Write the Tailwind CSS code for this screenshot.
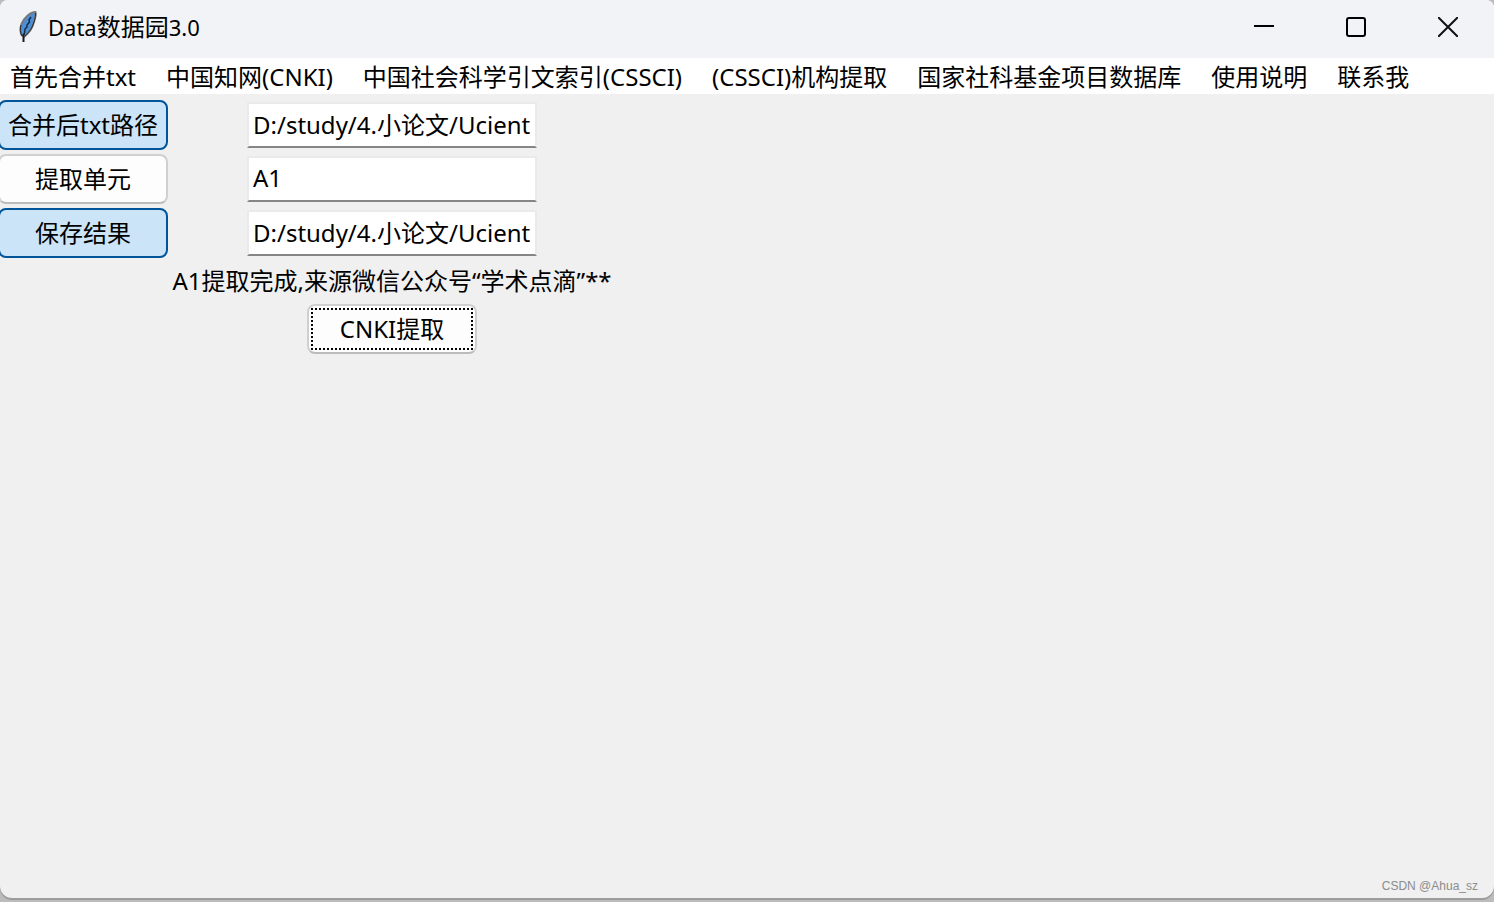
<!DOCTYPE html>
<html lang="zh-CN">
<head>
  <meta charset="UTF-8">
  <meta name="viewport" content="width=device-width, initial-scale=1.0">
  <title>Data数据园3.0</title>
  <script src="https://cdn.jsdelivr.net/npm/@tailwindcss/browser@4"></script>
</head>
<body class="min-h-screen flex flex-col bg-[#bcbcbc] pb-1 text-2xl text-black font-['Noto_Sans','Noto_Sans_CJK_SC',sans-serif]">
  <div class="relative flex-1 flex flex-col bg-[#f0f0f0] rounded-t-lg rounded-b-xl overflow-hidden shadow-[0_2px_0_#9c9c9c]">

    <!-- Title bar -->
    <header class="h-[58px] flex items-center bg-[#f1f3f7] pl-[18px] pb-1">
      <svg class="w-5 h-8 shrink-0" viewBox="0 0 20 32" fill="none">
        <path d="M17.500 1C12 1 6 7 3.500 13C2 17 2 20 3.500 24L6 26C11 22 14.500 17 16 11C17 7 18.500 4 17.500 1Z" fill="#4d8fd6" stroke="#77797c" stroke-width="2"/>
        <path d="M17.500 2C18 6 16 12 13.500 17C12 20 9 23 7 25M3 14C2 18 2 21 4 25" stroke="#2b2b2b" stroke-width="1"/>
        <path d="M13 6L11 9L11.500 11L9 14V16L7 18L6.500 22L5.500 24" stroke="#142c48" stroke-width="1.500"/>
        <path d="M5.500 23V31" stroke="#1c1c1c" stroke-width="2"/>
      </svg>
      <h1 class="ml-[10px] whitespace-nowrap"><span class="text-[22px]">Data</span>数据园<span class="text-[22px]">3.0</span></h1>
      <div class="ml-auto flex h-full">
        <button type="button" class="w-[92px] flex items-center justify-center" aria-label="最小化">
          <svg class="w-5 h-5" viewBox="0 0 20 20" stroke="#000" stroke-width="2"><path d="M0 9H20"/></svg>
        </button>
        <button type="button" class="w-[92px] flex items-center justify-center" aria-label="最大化">
          <svg class="w-5 h-5" viewBox="0 0 20 20" fill="none" stroke="#000" stroke-width="2"><rect x="1" y="1" width="18" height="18" rx="2"/></svg>
        </button>
        <button type="button" class="w-[92px] flex items-center justify-center" aria-label="关闭">
          <svg class="w-5 h-5" viewBox="0 0 20 20" stroke="#111" stroke-width="2"><path d="M0 0L20 20M20 0L0 20"/></svg>
        </button>
      </div>
    </header>

    <!-- Menu -->
    <nav class="h-9 flex items-center gap-[30px] bg-white pl-[10px] pt-px whitespace-nowrap">
      <a href="#">首先合并txt</a>
      <a href="#">中国知网(CNKI)</a>
      <a href="#">中国社会科学引文索引(CSSCI)</a>
      <a href="#">(CSSCI)机构提取</a>
      <a href="#">国家社科基金项目数据库</a>
      <a href="#">使用说明</a>
      <a href="#">联系我</a>
    </nav>

    <!-- Form, the left buttons run under the window edge -->
    <form class="mt-1 -ml-0.5 grid grid-cols-[170px_448px] items-center justify-items-center">
      <button type="button" id="path-btn" class="w-full h-[50px] my-0.5 rounded-lg border-2 border-[#005499] bg-[#cce4f7] whitespace-nowrap">合并后txt路径</button>
      <input type="text" aria-labelledby="path-btn" value="D:/study/4.小论文/Ucient" class="w-[290px] h-[46px] px-1 pb-1 bg-white border-2 border-[#eaeaea] border-b-[#868686] outline-none">

      <button type="button" id="unit-btn" class="w-full h-[50px] my-0.5 rounded-lg border-2 border-[#d0d0d0] border-b-[#bcbcbc] bg-[#fdfdfd]">提取单元</button>
      <input type="text" aria-labelledby="unit-btn" value="A1" class="w-[290px] h-[46px] px-1 pb-1 bg-white border-2 border-[#eaeaea] border-b-[#868686] outline-none">

      <button type="button" id="save-btn" class="w-full h-[50px] my-0.5 rounded-lg border-2 border-[#005499] bg-[#cce4f7]">保存结果</button>
      <input type="text" aria-labelledby="save-btn" value="D:/study/4.小论文/Ucient" class="w-[290px] h-[46px] px-1 pb-1 bg-white border-2 border-[#eaeaea] border-b-[#868686] outline-none">

      <p class="col-start-2 h-[42px] leading-[42px] whitespace-nowrap">A1提取完成,来源微信公众号“学术点滴”**</p>
      <button type="button" class="col-start-2 w-[170px] h-[50px] my-0.5 p-0.5 rounded-lg border-2 border-[#d0d0d0] border-b-[#bcbcbc] bg-[#fdfdfd]">
        <span class="flex h-full items-center justify-center border-2 border-dotted border-black">CNKI提取</span>
      </button>
    </form>

    <p class="absolute right-4 bottom-1 text-xs leading-4 text-[#8c8c8c] font-['Liberation_Sans',sans-serif]">CSDN @Ahua_sz</p>
  </div>
</body>
</html>
